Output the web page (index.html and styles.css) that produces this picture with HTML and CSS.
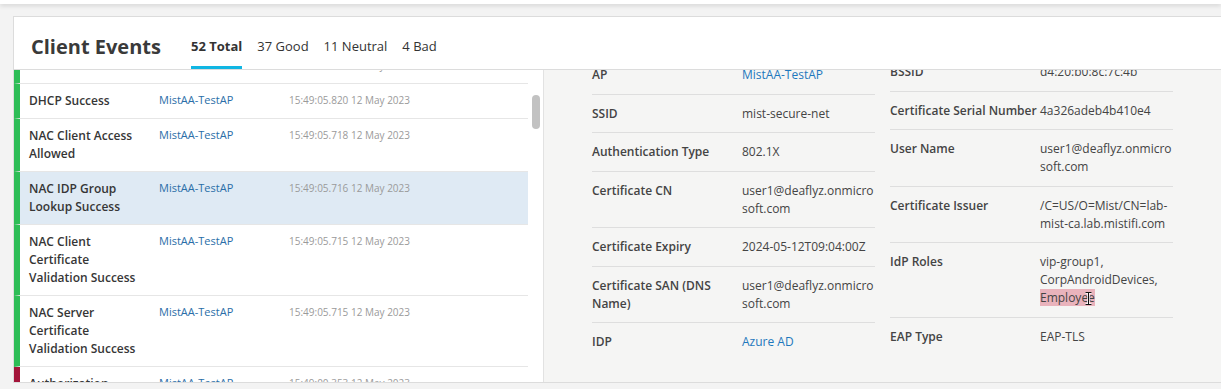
FILE: index.html
```html
<!DOCTYPE html>
<html lang="en">
<head>
  <meta charset="UTF-8" />
  <title>Client Events</title>
  <link rel="stylesheet" href="styles.css">
</head>
<body>
  <div class="topbar"></div>

  <div class="card">
    <div class="card-head">
      <h2 class="title">Client Events</h2>
      <div class="tabs">
        <span class="tab active">52 Total</span>
        <span class="tab">37 Good</span>
        <span class="tab">11 Neutral</span>
        <span class="tab">4 Bad</span>
      </div>
    </div>

    <div class="card-body">
      <div class="events">
        <div class="event-scroll">
          <div class="event-rows">
            <div class="event good">
              <div class="ev-name">DHCP ACK</div>
              <div class="ev-site">MistAA-TestAP</div>
              <div class="ev-time">15:49:05.821 12 May 2023</div>
            </div>
            <div class="event good">
              <div class="ev-name">DHCP Success</div>
              <div class="ev-site">MistAA-TestAP</div>
              <div class="ev-time">15:49:05.820 12 May 2023</div>
            </div>
            <div class="event good">
              <div class="ev-name">NAC Client Access Allowed</div>
              <div class="ev-site">MistAA-TestAP</div>
              <div class="ev-time">15:49:05.718 12 May 2023</div>
            </div>
            <div class="event good selected">
              <div class="ev-name">NAC IDP Group Lookup Success</div>
              <div class="ev-site">MistAA-TestAP</div>
              <div class="ev-time">15:49:05.716 12 May 2023</div>
            </div>
            <div class="event good">
              <div class="ev-name">NAC Client Certificate Validation Success</div>
              <div class="ev-site">MistAA-TestAP</div>
              <div class="ev-time">15:49:05.715 12 May 2023</div>
            </div>
            <div class="event good">
              <div class="ev-name">NAC Server Certificate Validation Success</div>
              <div class="ev-site">MistAA-TestAP</div>
              <div class="ev-time">15:49:05.715 12 May 2023</div>
            </div>
            <div class="event bad">
              <div class="ev-name">Authorization Failure</div>
              <div class="ev-site">MistAA-TestAP</div>
              <div class="ev-time">15:49:00.353 12 May 2023</div>
            </div>
          </div>
        </div>
        <div class="scrollbar"><div class="thumb"></div></div>
      </div>

      <div class="details">
        <div class="detail-col left">
          <div class="drow"><div class="dlabel">AP</div><div class="dvalue link">MistAA-TestAP</div></div>
          <div class="drow"><div class="dlabel">SSID</div><div class="dvalue">mist-secure-net</div></div>
          <div class="drow"><div class="dlabel">Authentication Type</div><div class="dvalue">802.1X</div></div>
          <div class="drow"><div class="dlabel">Certificate CN</div><div class="dvalue">user1@deaflyz.onmicrosoft.com</div></div>
          <div class="drow"><div class="dlabel">Certificate Expiry</div><div class="dvalue">2024-05-12T09:04:00Z</div></div>
          <div class="drow"><div class="dlabel">Certificate SAN (DNS Name)</div><div class="dvalue">user1@deaflyz.onmicrosoft.com</div></div>
          <div class="drow"><div class="dlabel">IDP</div><div class="dvalue link">Azure AD</div></div>
        </div>
        <div class="detail-col right">
          <div class="drow"><div class="dlabel">BSSID</div><div class="dvalue">d4:20:b0:8c:7c:4b</div></div>
          <div class="drow"><div class="dlabel">Certificate Serial Number</div><div class="dvalue">4a326adeb4b410e4</div></div>
          <div class="drow"><div class="dlabel">User Name</div><div class="dvalue">user1@deaflyz.onmicrosoft.com</div></div>
          <div class="drow"><div class="dlabel">Certificate Issuer</div><div class="dvalue">/C=US/O=Mist/CN=lab-mist-ca.lab.mistifi.com</div></div>
          <div class="drow"><div class="dlabel">IdP Roles</div><div class="dvalue">vip-group1, CorpAndroidDevices, <span class="selection">Employee<svg class="ibeam" width="7" height="13" viewBox="0 0 7 13"><path d="M0.5 0.5h6M3.5 0.5v12M0.5 12.5h6" stroke="#fff" stroke-width="2.4" fill="none"/><path d="M0.5 0.5h6M3.5 0.5v12M0.5 12.5h6" stroke="#111" stroke-width="1" fill="none"/></svg></span></div></div>
          <div class="drow"><div class="dlabel">EAP Type</div><div class="dvalue">EAP-TLS</div></div>
        </div>
      </div>
    </div>
  </div>
</body>
</html>
```

FILE: styles.css
```css
body {
  margin: 0;
  background-color: #f3f3f3;
  font-family: "Open Sans", Arial, sans-serif;
  color: #3d3d3d;
  overflow: hidden;
}

.topbar {
  height: 4px;
  background: white;
  box-shadow: 0 2px 4px rgba(0, 0, 0, 0.12);
}

.card {
  margin: 12px 0 0 13px;
  background: white;
  border: 1px solid #dcdcdc;
  border-right: none;
}

.card-head {
  display: flex;
  height: 52px;
  border-bottom: 1px solid #dcdcdc;
}

.title {
  margin: 0;
  padding: 12px 0 0 17px;
  line-height: 36px;
  font-size: 20px;
  font-weight: 700;
  color: #3a3a3a;
  width: 160px;
}

.tabs {
  display: flex;
  gap: 15px;
}

.tab {
  padding-top: 13px;
  line-height: 33px;
  font-size: 13px;
  color: #333;
  border-bottom: 3px solid transparent;
}

.tab.active {
  font-weight: 700;
  border-bottom-color: #10b6e3;
}

.card-body {
  display: flex;
  height: 312px;
}

/* event list */
.events {
  display: flex;
  width: 529px;
  background: white;
}

.event-scroll {
  width: 514px;
  overflow: hidden;
}

.event-rows {
  margin-top: -21px;
}

.event {
  display: flex;
  border-bottom: 1px solid #e6e6e6;
  border-left: 6px solid #2dbd56;
  padding: 8px 0 8px 9px;
  line-height: 18px;
}

.event.bad {
  border-left-color: #a3153a;
}

.event.selected {
  background: #dfeaf4;
}

.ev-name {
  width: 120px;
  padding-right: 10px;
  font-size: 12px;
  font-weight: 600;
  color: #363636;
}

.ev-site {
  width: 130px;
  font-size: 11px;
  color: #2a6ea8;
  line-height: 16px;
}

.ev-time {
  font-size: 10px;
  color: #9a9a9a;
  line-height: 16px;
}

.scrollbar {
  width: 15px;
}

.thumb {
  width: 8px;
  height: 34px;
  margin: 25px 0 0 4px;
  border-radius: 4px;
  background: #c2c2c2;
}

/* details */
.details {
  flex: 1;
  display: flex;
  gap: 15px;
  padding-left: 48px;
  background: #f5f5f4;
  border-left: 1px solid #e2e2e2;
  overflow: hidden;
}

.detail-col {
  width: 283px;
}

.drow {
  display: flex;
  padding: 10px 0 9.5px;
  border-bottom: 1px solid #dedede;
  font-size: 12px;
  line-height: 18px;
}

.detail-col.left {
  margin-top: -14px;
}

.detail-col.right {
  margin-top: -17px;
}

.drow:last-child {
  border-bottom: none;
}

.dlabel {
  width: 150px;
  flex-shrink: 0;
  font-weight: 600;
  color: #444;
}

.dvalue {
  flex: 1;
  color: #444;
  overflow-wrap: anywhere;
}

.dvalue.link {
  color: #1e78bd;
}

.selection {
  position: relative;
  background: #e9b3bc;
}

.ibeam {
  position: absolute;
  left: 45px;
  top: 3px;
}
```
